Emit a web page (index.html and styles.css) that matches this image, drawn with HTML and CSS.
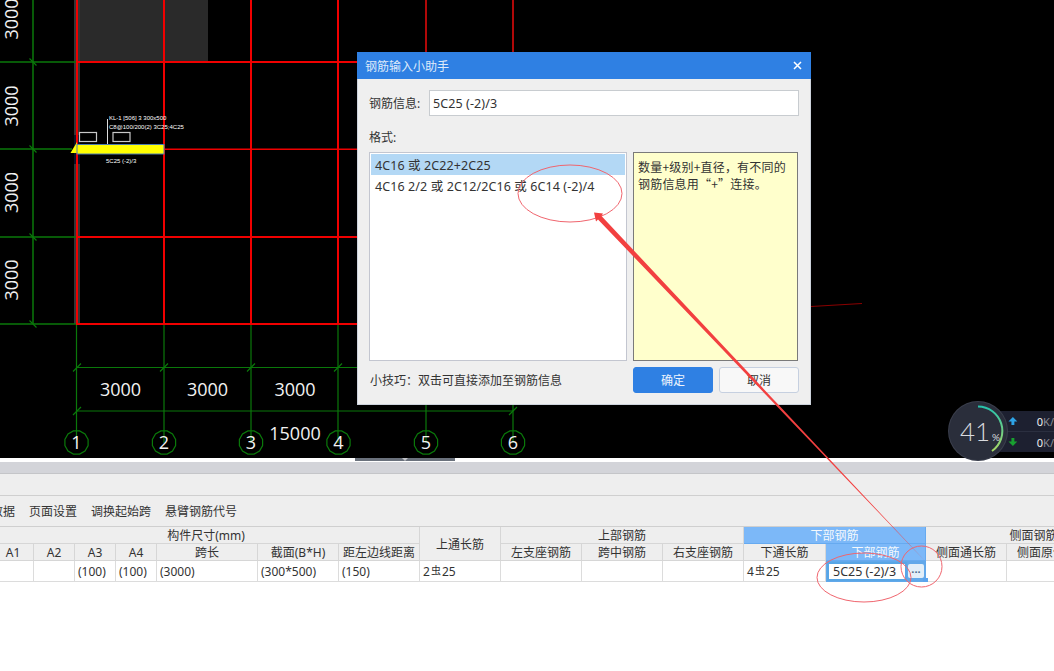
FILE: index.html
```html
<!DOCTYPE html>
<html lang="zh-CN">
<head>
<meta charset="utf-8">
<title>钢筋输入小助手</title>
<link rel="stylesheet" href="styles.css">
</head>
<body>
<div class="page">
  <section class="cad">
    <svg class="cad-svg" width="1054" height="458" viewBox="0 0 1054 458">
      <defs>
        <polygon id="bubble" points="11.6,3.1 8.5,8.5 3.1,11.6 -3.1,11.6 -8.5,8.5 -11.6,3.1 -11.6,-3.1 -8.5,-8.5 -3.1,-11.6 3.1,-11.6 8.5,-8.5 11.6,-3.1"/>
      </defs>
      <rect class="slab" x="79" y="0" width="129" height="62"/>
      <rect class="col" x="74" y="0" width="6" height="135"/>
      <rect class="col" x="74" y="164" width="6" height="160"/>
      <rect class="col-sel" x="74" y="135" width="6" height="29"/>
      <path class="green" d="M33 0V324M0 62H77M0 149H72M0 237H77M0 324H77"/>
      <path class="green-thin" d="M76.500 324V443M164 324V443M251 324V443M338 324V443M426 400V443M513 400V443M77 367.500H358M77 411H513"/>
      <path class="green-thin" d="M29.500 58.500L36.500 65.500M29.500 145.500L36.500 152.500M29.500 233.500L36.500 240.500M29.500 320.500L36.500 327.500M73 371.500L81 363.500M160 371.500L168 363.500M247 371.500L255 363.500M334 371.500L342 363.500M73 415L81 407M509 415L517 407"/>
      <path class="red" d="M77 0V325M164 0V325M251 0V325M338 0V325M77 62H357M77 237H357M77 324H357"/>
      <rect class="red-fill" x="164" y="148.500" width="193" height="1.500"/>
      <path class="red-dark" d="M426 0V52M513 0V52"/>
      <path class="red-faint" d="M811 306.500L862 303.500"/>
      <polygon class="beam-tip" points="70.500,153 77,142 77,153"/>
      <rect class="beam" x="77" y="144.500" width="87" height="9.500"/>
      <rect class="mark" x="79.500" y="132.500" width="17" height="9"/>
      <rect class="mark" x="113" y="132.500" width="17" height="9"/>
      <path class="leader" d="M107.500 119V144"/>
      <text class="tiny" x="109" y="120">KL-1 [506] 3 300x500</text>
      <text class="tiny" x="109" y="129">C8@100/200(2) 3C25;4C25</text>
      <text class="tiny" x="106" y="163">5C25 (-2)/3</text>
      <text class="dim" x="120.500" y="396">3000</text>
      <text class="dim" x="207.500" y="396">3000</text>
      <text class="dim" x="295" y="396">3000</text>
      <text class="dim" x="295" y="440">15000</text>
      <text class="dim" transform="translate(18 19) rotate(-90)">3000</text>
      <text class="dim" transform="translate(18 106) rotate(-90)">3000</text>
      <text class="dim" transform="translate(18 192.500) rotate(-90)">3000</text>
      <text class="dim" transform="translate(18 280) rotate(-90)">3000</text>
      <use class="ring" href="#bubble" x="76.500" y="442.500"/>
      <use class="ring" href="#bubble" x="164" y="442.500"/>
      <use class="ring" href="#bubble" x="251" y="442.500"/>
      <use class="ring" href="#bubble" x="338.500" y="442.500"/>
      <use class="ring" href="#bubble" x="426" y="442.500"/>
      <use class="ring" href="#bubble" x="513" y="442.500"/>
      <text class="dim" x="76.500" y="449">1</text>
      <text class="dim" x="164" y="449">2</text>
      <text class="dim" x="251" y="449">3</text>
      <text class="dim" x="338.500" y="449">4</text>
      <text class="dim" x="426" y="449">5</text>
      <text class="dim" x="513" y="449">6</text>
    </svg>
  </section>

  <div class="strip"><div class="strip-handle"></div></div>
  <div class="tabbar"></div>
  <div class="toolbar-empty"></div>
  <nav class="menu">
    <span class="menu-first">数据</span>
    <span>页面设置</span>
    <span>调换起始跨</span>
    <span>悬臂钢筋代号</span>
  </nav>

  <div class="grid-wrap">
    <div class="grid">
      <div class="th s7">构件尺寸(mm)</div>
      <div class="th r2">上通长筋</div>
      <div class="th s3">上部钢筋</div>
      <div class="th s2 th-active">下部钢筋</div>
      <div class="th s3">侧面钢筋</div>

      <div class="th">A1</div>
      <div class="th">A2</div>
      <div class="th">A3</div>
      <div class="th">A4</div>
      <div class="th">跨长</div>
      <div class="th">截面(B*H)</div>
      <div class="th">距左边线距离</div>
      <div class="th">左支座钢筋</div>
      <div class="th">跨中钢筋</div>
      <div class="th">右支座钢筋</div>
      <div class="th">下通长筋</div>
      <div class="th th-active">下部钢筋</div>
      <div class="th">侧面通长筋</div>
      <div class="th">侧面原位筋</div>
      <div class="th"></div>

      <div class="td"></div>
      <div class="td"></div>
      <div class="td">(100)</div>
      <div class="td">(100)</div>
      <div class="td">(3000)</div>
      <div class="td">(300*500)</div>
      <div class="td">(150)</div>
      <div class="td">2<span class="grade">虫</span>25</div>
      <div class="td"></div>
      <div class="td"></div>
      <div class="td"></div>
      <div class="td">4<span class="grade">虫</span>25</div>
      <div class="td td-edit">
        <span class="cell-input">5C25 (-2)/3</span>
        <span class="cell-btn">···</span>
        <span class="cell-handle"></span>
      </div>
      <div class="td"></div>
      <div class="td"></div>
      <div class="td"></div>
    </div>
  </div>

  <aside class="monitor">
    <div class="net">
      <div class="net-row"><svg class="net-icon" width="10" height="10" viewBox="0 0 10 10"><path class="up" d="M5 1L9.500 5.500H6.500V9H3.500V5.500H0.500Z"/></svg><span class="net-val">0<em>K/</em></span></div>
      <div class="net-row net-row-last"><svg class="net-icon" width="10" height="10" viewBox="0 0 10 10"><path class="down" d="M5 9L9.500 4.500H6.500V1H3.500V4.500H0.500Z"/></svg><span class="net-val">0<em>K/</em></span></div>
    </div>
    <div class="gauge">
      <svg class="gauge-arc" width="58" height="58" viewBox="0 0 58 58">
        <defs>
          <linearGradient id="arcg" x1="0" y1="0" x2="0" y2="1">
            <stop offset="0" stop-color="#27c3ac"/>
            <stop offset="1" stop-color="#a8d866"/>
          </linearGradient>
        </defs>
        <path class="arc" d="M29 4.500A24.500 24.500 0 0 1 43 49"/>
      </svg>
      <span class="gauge-val">41<small>%</small></span>
    </div>
  </aside>

  <div class="dialog">
    <header class="dialog-title">
      <span>钢筋输入小助手</span>
      <svg class="close" width="9" height="9" viewBox="0 0 9 9"><path d="M1 1L8 8M8 1L1 8"/></svg>
    </header>
    <div class="dialog-body">
      <div class="field">
        <label class="field-label">钢筋信息:</label>
        <div class="input">5C25 (-2)/3</div>
      </div>
      <div class="format-label">格式:</div>
      <div class="panes">
        <ul class="list">
          <li class="selected">4C16 或 2C22+2C25</li>
          <li>4C16 2/2 或 2C12/2C16 或 6C14 (-2)/4</li>
        </ul>
        <div class="hint">数量+级别+直径，有不同的钢筋信息用“+”连接。</div>
      </div>
      <div class="footer">
        <span class="tip">小技巧：双击可直接添加至钢筋信息</span>
        <button class="btn btn-primary">确定</button>
        <button class="btn">取消</button>
      </div>
    </div>
  </div>

  <svg class="notes" width="1054" height="671" viewBox="0 0 1054 671">
    <ellipse class="note-ring" cx="570" cy="193.500" rx="52" ry="28.500"/>
    <ellipse class="note-ring" cx="864" cy="577.500" rx="47" ry="24.500"/>
    <ellipse class="note-ring" cx="921.500" cy="566.500" rx="20.500" ry="20.500"/>
    <polygon class="note-arrow" points="594,212.500 603,213.500 601.500,216 926,562 598,219.500 596,221.500"/>
  </svg>
</div>
</body>
</html>
```

FILE: styles.css
```css
* { box-sizing: border-box; }
html, body { margin: 0; padding: 0; background: #fff; }
body { font-family: "Noto Sans", "Noto Sans CJK SC", sans-serif; font-size: 12px; color: #333; }

.page { position: relative; width: 1054px; height: 671px; overflow: hidden; background: #fff; }

/* CAD canvas */
.cad { height: 458px; background: #000; }
.cad-svg { display: block; }
.slab { fill: #2a2a2a; }
.col { fill: #363636; }
.col-sel { fill: #0a1226; }
.green { fill: none; stroke: #0a780a; stroke-width: 1.5; }
.green-thin { fill: none; stroke: #0a780a; stroke-width: 1.2; }
.red { fill: none; stroke: #f00000; stroke-width: 2; }
.red-fill { fill: #f00000; }
.red-dark { fill: none; stroke: #b00808; stroke-width: 2; }
.red-faint { fill: none; stroke: #8a0000; stroke-width: 1.2; }
.beam { fill: #ffff00; stroke: #4d7db0; stroke-width: 1; }
.beam-tip { fill: #ffff00; }
.mark { fill: none; stroke: #c8c8c8; stroke-width: 1.2; }
.leader { fill: none; stroke: #ddd; stroke-width: 1; }
.tiny { fill: #fff; font-family: "Liberation Sans", sans-serif; font-size: 6px; }
.dim { fill: #f2f2f2; font-family: "Open Sans", sans-serif; font-size: 18px; text-anchor: middle; }
.ring { fill: none; stroke: #0a780a; stroke-width: 1.2; }

/* Panels under the canvas */
.strip { height: 4px; background: #fff; }
.strip-handle { position: relative; width: 100px; height: 3px; margin-left: 355px; background: #6a717c; }
.strip-handle::after {
  content: ""; position: absolute; left: 47px; top: 0;
  border-left: 3px solid transparent; border-right: 3px solid transparent; border-top: 3px solid #c2c4c8;
}
.tabbar { height: 12px; background: #d3d4d9; border-bottom: 1px solid #c4c5c8; }
.toolbar-empty { height: 22px; background: #eeeeee; border-bottom: 1px solid #cfcfcf; }
.menu {
  display: flex; align-items: center; gap: 14px; width: 1063px; height: 30px; margin-left: -9px;
  padding-bottom: 1px; background: #eeeeee; color: #333; white-space: nowrap;
}

/* Table */
.grid-wrap { overflow: hidden; border-top: 1px solid #cfcfcf; }
.grid {
  display: grid; width: 1125px; margin-left: -7px;
  grid-template-columns: 41px 41px 41px 41px 101px 81px 81px 81px 81px 81px 81px 82px 100px 81px 81px 54px;
  grid-template-rows: 17px 17px 21px;
}
.th {
  display: flex; align-items: center; justify-content: center;
  background: #eeeeee; color: #333; white-space: nowrap;
  border-right: 1px solid #d6d6d6; border-bottom: 1px solid #d6d6d6;
}
.s7 { grid-column: span 7; }
.s3 { grid-column: span 3; }
.s2 { grid-column: span 2; }
.r2 { grid-row: span 2; }
.th-active { background: #7cb8f8; color: #f4f8fc; border-color: #66aaf0; }
.td {
  display: flex; align-items: center; padding-left: 3px; background: #fff; color: #333; white-space: nowrap;
  border-right: 1px solid #dcdcdc; border-bottom: 1px solid #dcdcdc;
}
.grade { font-family: "Noto Sans CJK SC", sans-serif; font-size: 10px; position: relative; top: -2px; margin: 0 1px; }
.td-edit { position: relative; padding: 1px 0 1px 1px; gap: 1px; background: #62a8ea; border-color: #62a8ea; }
.cell-input {
  display: flex; align-items: center; width: 80px; height: 19px; padding-left: 4px;
  background: #fff; color: #333; border: 2px solid #58a6e6; font-size: 12.500px;
}
.cell-btn {
  display: flex; align-items: center; justify-content: center; width: 16px; height: 14px;
  background: #e2eef8; color: #4a6a8a; border-radius: 2px; font-size: 11px; font-weight: 700; line-height: 1;
}
.cell-handle { position: absolute; right: -3px; bottom: -2px; width: 5px; height: 5px; background: #5aa4ee; }

/* Monitor widget */
.monitor { position: absolute; left: 949px; top: 402px; width: 105px; height: 58px; }
.net {
  position: absolute; left: 48px; top: 9px; width: 57px; height: 41px;
  display: flex; flex-direction: column; background: #1d2030; border-radius: 4px 0 0 4px;
}
.net-row { flex: 1; display: flex; align-items: center; padding-left: 11px; border-bottom: 1px solid #2b2f40; }
.net-row-last { border-bottom: 0; }
.net-icon { display: block; }
.up { fill: #2ea3e6; }
.down { fill: #18a030; }
.net-val { margin-left: 19px; color: #f0f0f0; font-size: 11px; }
.net-val em { font-style: normal; color: #8a8e98; }
.gauge {
  position: absolute; left: 0; top: 0; width: 58px; height: 58px; border-radius: 50%;
  display: flex; align-items: center; justify-content: center;
  background: #2a2e3b; box-shadow: 0 0 0 1px #3a3e4c;
}
.gauge-arc { position: absolute; left: 0; top: 0; }
.arc { fill: none; stroke: url(#arcg); stroke-width: 2; }
.gauge-val { color: #d8dade; font-family: "Lato", sans-serif; font-weight: 300; font-size: 26px; margin-left: 4px; }
.gauge-val small { font-size: 10px; font-weight: 400; margin-left: 2px; }

/* Dialog */
.dialog {
  position: absolute; left: 357px; top: 52px; width: 454px; height: 353px;
  display: flex; flex-direction: column; background: #efefef; border: 1px solid #cdd3dc; border-top: 0;
}
.dialog-title {
  display: flex; align-items: center; justify-content: space-between;
  height: 27px; margin: 0 -1px; padding: 0 9px 0 8px; background: #2f80e3; color: #dfeafa;
}
.close { display: block; }
.close path { fill: none; stroke: #fff; stroke-width: 1.5; }
.dialog-body { flex: 1; display: flex; flex-direction: column; padding: 11px; }
.field { display: flex; align-items: center; height: 26px; }
.field-label { width: 60px; color: #333; }
.input { flex: 1; height: 26px; line-height: 25px; padding-left: 3px; background: #fff; border: 1px solid #c8ccd0; color: #333; font-size: 12.500px; letter-spacing: 0.1px; }
.format-label { margin-top: 13px; height: 18px; line-height: 18px; color: #333; }
.panes { display: flex; gap: 6px; height: 209px; margin-top: 5px; }
.list {
  width: 258px; margin: 0; padding: 1px; list-style: none; background: #fff; border: 1px solid #c3c6d0;
}
.list li { height: 21px; line-height: 23px; padding-left: 4px; color: #333; font-size: 12.500px; letter-spacing: 0.1px; white-space: nowrap; }
.list .selected { background: #b3d8f5; }
.hint {
  width: 165px; padding: 5px 4px; background: #ffffcc; border: 1px solid #7a7a7a; color: #333; line-height: 17px;
  font-family: "Noto Sans CJK SC", sans-serif; letter-spacing: 0.2px;
}
.footer { display: flex; align-items: center; gap: 6px; margin-top: 6px; height: 26px; }
.tip { width: 258px; padding-left: 1px; color: #333; }
.btn {
  width: 80px; height: 26px; padding: 0; font: inherit; color: #333; background: #f8f8f8;
  border: 1px solid #c6d0e0; border-radius: 3px;
}
.btn-primary { background: #2f80e3; border-color: #2f80e3; color: #eef4fc; }

/* Hand-drawn annotations */
.notes { position: absolute; left: 0; top: 0; pointer-events: none; }
.note-ring { fill: none; stroke: #f0656e; stroke-width: 1; }
.note-arrow { fill: #f24040; }
```
